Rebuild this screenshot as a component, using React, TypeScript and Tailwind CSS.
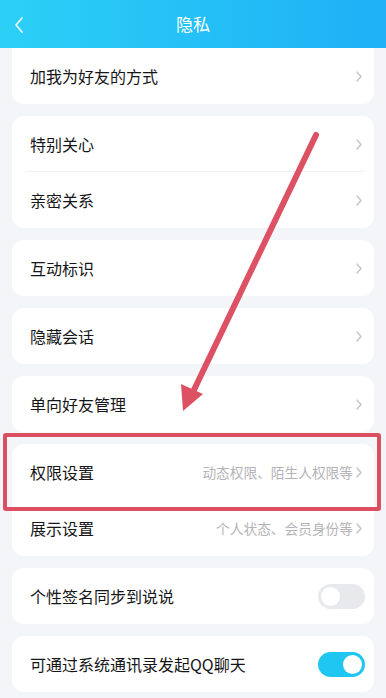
import React from 'react';

const FONT = { fontFamily: '"Noto Sans CJK SC", "Noto Sans", sans-serif' };

function Chevron() {
  return (
    <svg width="8" height="13" viewBox="0 0 8 13" className="shrink-0">
      <path d="M2 2 L6 6.5 L2 11" fill="none" stroke="#c4c4c8" strokeWidth="1.4" strokeLinecap="round" strokeLinejoin="round" />
    </svg>
  );
}

function Row({ label, hint, divider }: { label: string; hint?: string; divider?: boolean }) {
  return (
    <div className="relative h-14 flex items-center pl-[18px] pr-[11px]">
      <span className="text-[16px] text-[#161618] flex-1">{label}</span>
      {hint && <span className="text-[13.7px] text-[#b4b4b8] mr-[2px]">{hint}</span>}
      <Chevron />
      {divider && <div className="absolute left-[14px] right-[10px] bottom-0 h-px bg-[#f0f0f3]" />}
    </div>
  );
}

function Toggle({ on }: { on: boolean }) {
  return (
    <div
      className={
        on
          ? 'w-[47px] h-[25px] rounded-full bg-[#1fc6f2] flex items-center justify-end px-[3px]'
          : 'w-[47px] h-[25px] rounded-full bg-[#e8e9ed] flex items-center justify-start px-[3px]'
      }
    >
      <div className="w-[19px] h-[19px] rounded-full bg-white" />
    </div>
  );
}

function SwitchRow({ label, on }: { label: string; on: boolean }) {
  return (
    <div className="h-14 flex items-center pl-[18px] pr-[9px]">
      <span className="text-[16px] text-[#161618] flex-1">{label}</span>
      <Toggle on={on} />
    </div>
  );
}

export default function App() {
  return (
    <div className="relative w-[386px] h-[698px] overflow-hidden bg-[#f4f5f9]" style={FONT}>
      <div className="h-12 flex items-center justify-center relative bg-gradient-to-r from-[#2cd0f6] to-[#1fb0f6]">
        <svg width="12" height="18" viewBox="0 0 12 18" className="absolute left-[13px] top-[16px]">
          <path d="M9 2 L3 9 L9 16" fill="none" stroke="#e6f9ff" strokeWidth="1.8" strokeLinecap="round" strokeLinejoin="round" />
        </svg>
        <span className="text-white text-[17px]">隐私</span>
      </div>

      <div className="px-3 flex flex-col gap-3">
        <div className="bg-white rounded-b-xl">
          <Row label="加我为好友的方式" />
        </div>
        <div className="bg-white rounded-xl">
          <Row label="特别关心" divider />
          <Row label="亲密关系" />
        </div>
        <div className="bg-white rounded-xl">
          <Row label="互动标识" />
        </div>
        <div className="bg-white rounded-xl">
          <Row label="隐藏会话" />
        </div>
        <div className="bg-white rounded-xl">
          <Row label="单向好友管理" />
        </div>
        <div className="bg-white rounded-xl">
          <Row label="权限设置" hint="动态权限、陌生人权限等" />
          <Row label="展示设置" hint="个人状态、会员身份等" />
        </div>
        <div className="bg-white rounded-xl">
          <SwitchRow label="个性签名同步到说说" on={false} />
        </div>
        <div className="bg-white rounded-xl">
          <SwitchRow label="可通过系统通讯录发起QQ聊天" on={true} />
        </div>
      </div>

      {/* annotation overlay */}
      <div className="absolute left-[3px] top-[433px] w-[378px] h-[78px] border-4 border-[#db4f60] rounded-[3px]" />
      <svg width="386" height="698" className="absolute left-0 top-0 pointer-events-none">
        <line x1="316" y1="135" x2="193" y2="392" stroke="#dc5264" strokeWidth="6" strokeLinecap="round" />
        <polygon points="183,411 181,384 203,394" fill="#dc5264" />
      </svg>
    </div>
  );
}
